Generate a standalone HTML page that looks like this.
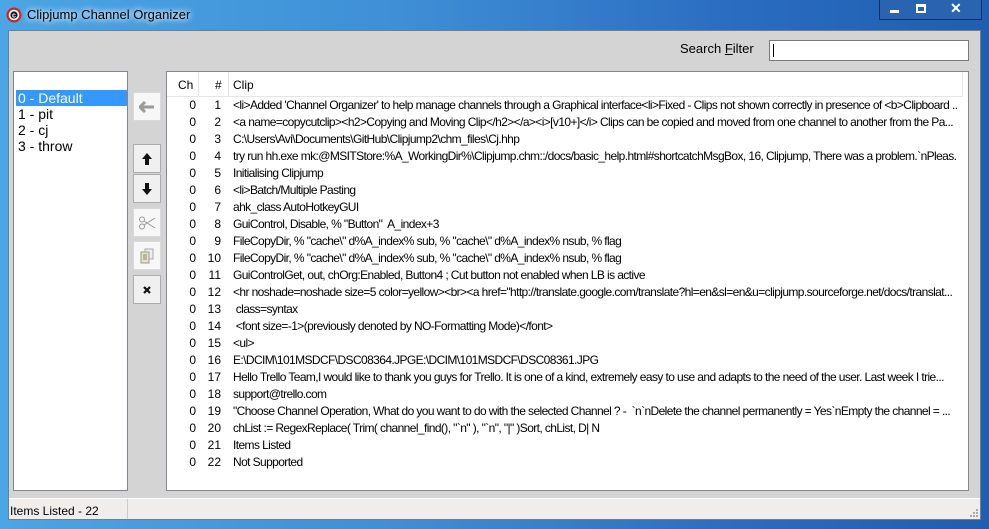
<!DOCTYPE html>
<html><head><meta charset="utf-8"><style>
*{margin:0;padding:0;box-sizing:border-box}
body{width:989px;height:529px;overflow:hidden;position:relative;font-family:"Liberation Sans",sans-serif;font-size:12px;color:#000;background:linear-gradient(90deg,#4aa6e4 0%,#3f8fd6 40%,#2a6cc0 75%,#1f5eb0 100%)}
.abs{position:absolute}
.title{left:27px;top:7px;font-size:13px;color:#000;text-shadow:0 0 6px #fff,0 0 8px #fff}
.client{left:8px;top:30px;width:973px;height:490px;background:#d4d4d4;border:1px solid #6b7f95}
.ctl{left:879px;top:0;width:103px;height:20px;border:1px solid #0d2f6a;border-top:none;background:#2a63b0}
.list{left:13px;top:71px;width:115px;height:420px;background:#fff;border:1px solid #828790}
.lv{left:166px;top:71px;width:803px;height:420px;background:#fff;border:1px solid #828790;overflow:hidden}
.btn{left:133px;width:28px;height:29px;background:#f0f0f0;border:1px solid #adadad;display:flex;align-items:center;justify-content:center}
.btn.dis{border-color:#d9d9d9;background:#f7f7f7}
.row{position:absolute;left:0;width:790px;height:17px;white-space:nowrap;overflow:hidden}
.row span{position:absolute;top:0}
.row span:last-child{letter-spacing:-0.6px}
.status{left:9px;top:498px;width:971px;height:21px;background:#f0edeb;border-top:1px solid #fff}
</style></head><body>
<svg class="abs" style="left:6px;top:7px" width="16" height="16" viewBox="0 0 16 16"><circle cx="8" cy="8" r="7.5" fill="#d62020"/><circle cx="8" cy="8" r="5.3" fill="#fff"/><circle cx="8" cy="8" r="3.6" fill="#111"/><text x="8" y="10.5" font-size="7" fill="#fff" text-anchor="middle" font-family="Liberation Sans" font-weight="bold">c</text></svg>
<div class="abs title">Clipjump Channel Organizer</div>
<div class="abs ctl">
<div class="abs" style="left:10px;top:10px;width:9px;height:3px;background:#fff"></div>
<div class="abs" style="left:36px;top:4px;width:10px;height:9px;border:2px solid #fff;border-top-width:3px"></div>
<div class="abs" style="left:70px;top:0px;color:#fff;font-weight:bold;font-size:14px">✕</div>
</div>
<div class="abs client"></div>
<div class="abs" style="left:680px;top:41px;font-size:13px">Search <u>F</u>ilter</div>
<div class="abs" style="left:769px;top:40px;width:200px;height:21px;background:#fff;border:1px solid #7a7a7a"><div class="abs" style="left:3px;top:3px;width:1px;height:13px;background:#000"></div></div>
<div class="abs list">
<div class="abs" style="left:2px;top:18px;width:111px;height:16px;background:#3399ff"></div>
<div class="abs" style="left:4px;top:18px;font-size:14px;line-height:16px;color:#fff">0 - Default</div>
<div class="abs" style="left:4px;top:34px;font-size:14px;line-height:16px">1 - pit<br>2 - cj<br>3 - throw</div>
</div>
<div class="abs btn dis" style="top:92px"><svg width="16" height="12" viewBox="0 0 16 12"><path d="M1 6H15M6 1L1 6L6 11" stroke="#9a9a9a" stroke-width="3" fill="none"/></svg></div>
<div class="abs btn" style="top:144px"><svg width="12" height="14" viewBox="0 0 12 14"><path d="M6 1L1 7H4V13H8V7H11Z" fill="#111"/></svg></div>
<div class="abs btn" style="top:174px"><svg width="12" height="14" viewBox="0 0 12 14"><path d="M6 13L1 7H4V1H8V7H11Z" fill="#111"/></svg></div>
<div class="abs btn dis" style="top:208px"><svg width="18" height="14" viewBox="0 0 18 14"><circle cx="4" cy="3.5" r="2.5" stroke="#999" fill="none"/><circle cx="4" cy="10.5" r="2.5" stroke="#999" fill="none"/><path d="M6 5L17 12M6 9L17 2" stroke="#999"/></svg></div>
<div class="abs btn dis" style="top:241px"><svg width="14" height="16" viewBox="0 0 14 16"><rect x="5" y="1" width="8" height="10" fill="#eee" stroke="#aaa"/><rect x="1" y="4" width="8" height="11" fill="#e8e2c0" stroke="#999"/><path d="M3 7H7M3 9H7M3 11H7" stroke="#888"/></svg></div>
<div class="abs btn" style="top:275px"><svg width="10" height="10" viewBox="0 0 10 10"><path d="M2 2L8 8M8 2L2 8" stroke="#111" stroke-width="2.2"/></svg></div>
<div class="abs lv">
<div class="abs" style="left:0;top:0;width:796px;height:25px;border-bottom:1px solid #e5e5e5;background:#fff">
<div class="abs" style="left:11px;top:6px">Ch</div>
<div class="abs" style="left:31px;top:0;width:1px;height:24px;background:#e5e5e5"></div>
<div class="abs" style="left:48px;top:6px">#</div>
<div class="abs" style="left:61px;top:0;width:1px;height:24px;background:#e5e5e5"></div>
<div class="abs" style="left:66px;top:6px">Clip</div>
<div class="abs" style="left:795px;top:0;width:1px;height:24px;background:#e5e5e5"></div>
</div>
</div>
<div class="abs status"><div class="abs" style="left:1px;top:5px">Items Listed - 22</div><div class="abs" style="left:118px;top:0;width:1px;height:20px;background:#cfcac6"></div>
<svg class="abs" style="left:960px;top:9px" width="10" height="10"><g fill="#aaa"><rect x="7" y="1" width="2" height="2"/><rect x="4" y="4" width="2" height="2"/><rect x="7" y="4" width="2" height="2"/><rect x="1" y="7" width="2" height="2"/><rect x="4" y="7" width="2" height="2"/><rect x="7" y="7" width="2" height="2"/></g></svg></div>
<div class="abs" style="left:167px;top:98px;width:800px;height:380px">
<div class="row" style="top:0"><span style="right:761px">0</span><span style="right:736px">1</span><span style="left:66px">&lt;li&gt;Added 'Channel Organizer' to help manage channels through a Graphical interface&lt;li&gt;Fixed - Clips not shown correctly in presence of &lt;b&gt;Clipboard ...</span></div>
<div class="row" style="top:17px"><span style="right:761px">0</span><span style="right:736px">2</span><span style="left:66px">&lt;a name=copycutclip&gt;&lt;h2&gt;Copying and Moving Clip&lt;/h2&gt;&lt;/a&gt;&lt;i&gt;[v10+]&lt;/i&gt; Clips can be copied and moved from one channel to another from the Pa...</span></div>
<div class="row" style="top:34px"><span style="right:761px">0</span><span style="right:736px">3</span><span style="left:66px">C:\Users\Avi\Documents\GitHub\Clipjump2\chm_files\Cj.hhp</span></div>
<div class="row" style="top:51px"><span style="right:761px">0</span><span style="right:736px">4</span><span style="left:66px">try run hh.exe mk:@MSITStore:%A_WorkingDir%\Clipjump.chm::/docs/basic_help.html#shortcatchMsgBox, 16, Clipjump, There was a problem.`nPleas...</span></div>
<div class="row" style="top:68px"><span style="right:761px">0</span><span style="right:736px">5</span><span style="left:66px">Initialising Clipjump</span></div>
<div class="row" style="top:85px"><span style="right:761px">0</span><span style="right:736px">6</span><span style="left:66px">&lt;li&gt;Batch/Multiple Pasting</span></div>
<div class="row" style="top:102px"><span style="right:761px">0</span><span style="right:736px">7</span><span style="left:66px">ahk_class AutoHotkeyGUI</span></div>
<div class="row" style="top:119px"><span style="right:761px">0</span><span style="right:736px">8</span><span style="left:66px">GuiControl, Disable, % "Button"&nbsp; A_index+3</span></div>
<div class="row" style="top:136px"><span style="right:761px">0</span><span style="right:736px">9</span><span style="left:66px">FileCopyDir, % "cache\" d%A_index% sub, % "cache\" d%A_index% nsub, % flag</span></div>
<div class="row" style="top:153px"><span style="right:761px">0</span><span style="right:736px">10</span><span style="left:66px">FileCopyDir, % "cache\" d%A_index% sub, % "cache\" d%A_index% nsub, % flag</span></div>
<div class="row" style="top:170px"><span style="right:761px">0</span><span style="right:736px">11</span><span style="left:66px">GuiControlGet, out, chOrg:Enabled, Button4 ; Cut button not enabled when LB is active</span></div>
<div class="row" style="top:187px"><span style="right:761px">0</span><span style="right:736px">12</span><span style="left:66px">&lt;hr noshade=noshade size=5 color=yellow&gt;&lt;br&gt;&lt;a href="http://translate.google.com/translate?hl=en&amp;sl=en&amp;u=clipjump.sourceforge.net/docs/translat...</span></div>
<div class="row" style="top:204px"><span style="right:761px">0</span><span style="right:736px">13</span><span style="left:66px">&nbsp;class=syntax</span></div>
<div class="row" style="top:221px"><span style="right:761px">0</span><span style="right:736px">14</span><span style="left:66px">&nbsp;&lt;font size=-1&gt;(previously denoted by NO-Formatting Mode)&lt;/font&gt;</span></div>
<div class="row" style="top:238px"><span style="right:761px">0</span><span style="right:736px">15</span><span style="left:66px">&lt;ul&gt;</span></div>
<div class="row" style="top:255px"><span style="right:761px">0</span><span style="right:736px">16</span><span style="left:66px">E:\DCIM\101MSDCF\DSC08364.JPGE:\DCIM\101MSDCF\DSC08361.JPG</span></div>
<div class="row" style="top:272px"><span style="right:761px">0</span><span style="right:736px">17</span><span style="left:66px">Hello Trello Team,I would like to thank you guys for Trello. It is one of a kind, extremely easy to use and adapts to the need of the user. Last week I trie...</span></div>
<div class="row" style="top:289px"><span style="right:761px">0</span><span style="right:736px">18</span><span style="left:66px">support@trello.com</span></div>
<div class="row" style="top:306px"><span style="right:761px">0</span><span style="right:736px">19</span><span style="left:66px">"Choose Channel Operation, What do you want to do with the selected Channel ? -&nbsp; `n`nDelete the channel permanently = Yes`nEmpty the channel = ...</span></div>
<div class="row" style="top:323px"><span style="right:761px">0</span><span style="right:736px">20</span><span style="left:66px">chList := RegexReplace( Trim( channel_find(), "`n" ), "`n", "|" )Sort, chList, D| N</span></div>
<div class="row" style="top:340px"><span style="right:761px">0</span><span style="right:736px">21</span><span style="left:66px">Items Listed</span></div>
<div class="row" style="top:357px"><span style="right:761px">0</span><span style="right:736px">22</span><span style="left:66px">Not Supported</span></div>
</div>
</body></html>
